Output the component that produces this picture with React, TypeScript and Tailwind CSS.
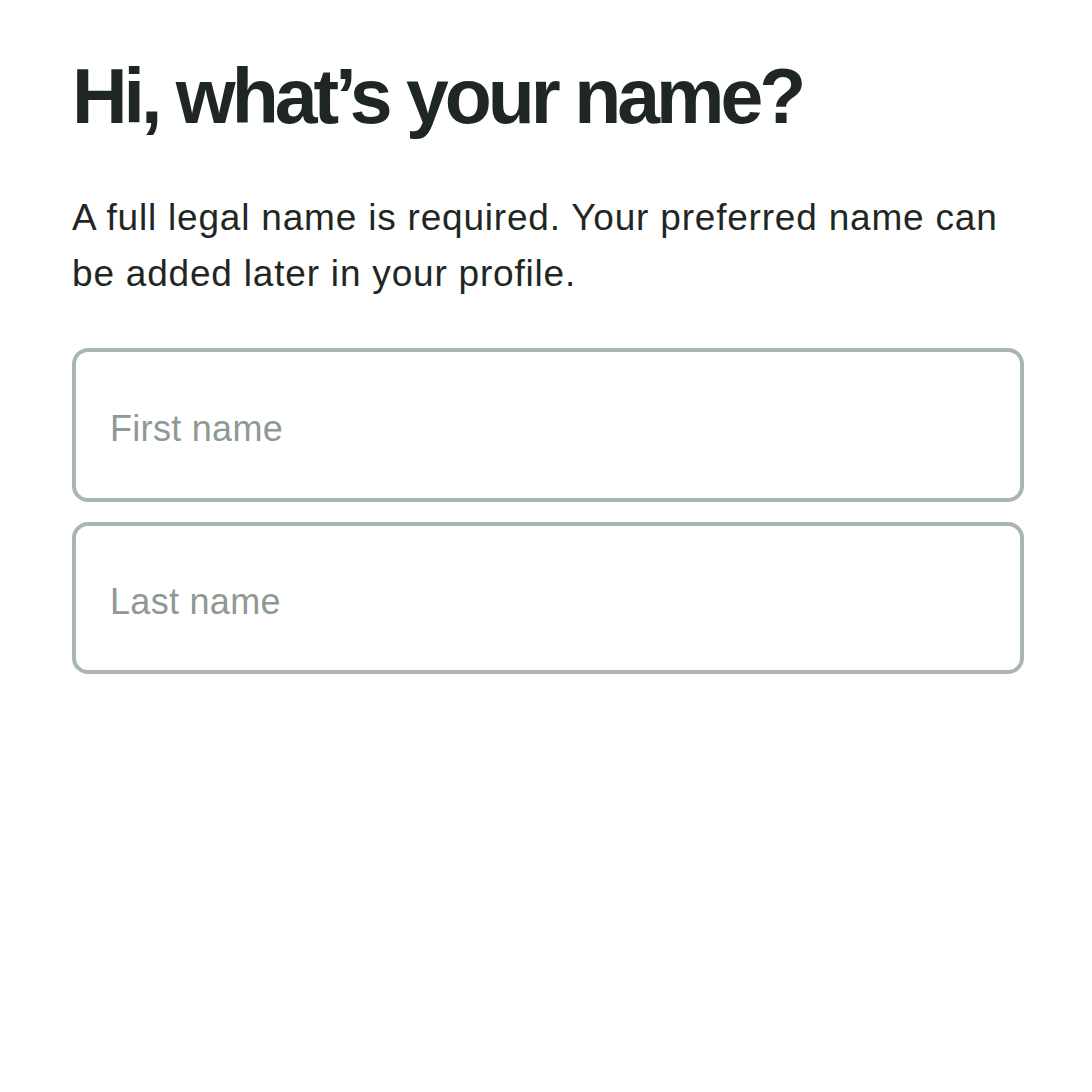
export default function App() {
  return (
    <div className="min-h-screen bg-white font-['Liberation_Sans',Arial,sans-serif] text-[#1f2723]">
      <div className="px-[72px] pt-[52px]">
        <h1 className="text-[77px] font-bold leading-[88px] tracking-[-4px]">
          Hi, what’s your name?
        </h1>
        <p className="mt-[50px] w-[948px] text-[37px] leading-[56px] tracking-[0.8px]">
          A full legal name is required. Your preferred name can be added later in your profile.
        </p>

        <div className="mt-[46px] flex w-[952px] flex-col gap-[20px]">
          <input
            type="text"
            placeholder="First name"
            className="h-[154px] w-full rounded-[16px] border-4 border-[#aab7b1] bg-white px-[34px] pt-[8px] text-[36px] tracking-[0.3px] text-[#1f2723] outline-none placeholder:text-[#8e9994]"
          />
          <input
            type="text"
            placeholder="Last name"
            className="h-[152px] w-full rounded-[16px] border-4 border-[#aab7b1] bg-white px-[34px] pt-[8px] text-[36px] tracking-[0.3px] text-[#1f2723] outline-none placeholder:text-[#8e9994]"
          />
        </div>
      </div>
    </div>
  );
}
